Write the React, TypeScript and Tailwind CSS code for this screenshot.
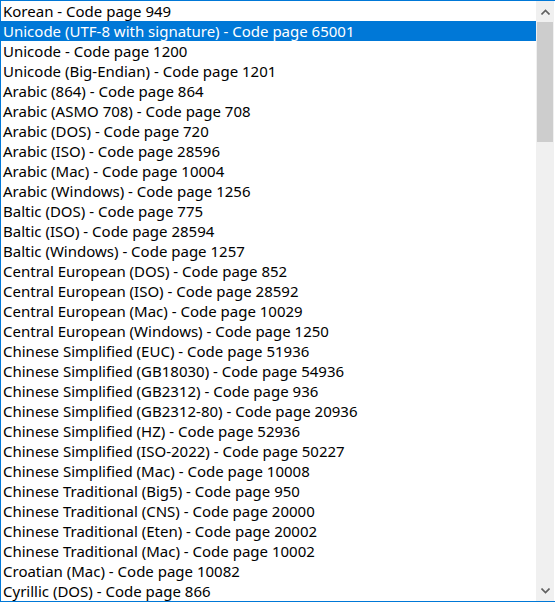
const encodings = [
  'Korean - Code page 949',
  'Unicode (UTF-8 with signature) - Code page 65001',
  'Unicode - Code page 1200',
  'Unicode (Big-Endian) - Code page 1201',
  'Arabic (864) - Code page 864',
  'Arabic (ASMO 708) - Code page 708',
  'Arabic (DOS) - Code page 720',
  'Arabic (ISO) - Code page 28596',
  'Arabic (Mac) - Code page 10004',
  'Arabic (Windows) - Code page 1256',
  'Baltic (DOS) - Code page 775',
  'Baltic (ISO) - Code page 28594',
  'Baltic (Windows) - Code page 1257',
  'Central European (DOS) - Code page 852',
  'Central European (ISO) - Code page 28592',
  'Central European (Mac) - Code page 10029',
  'Central European (Windows) - Code page 1250',
  'Chinese Simplified (EUC) - Code page 51936',
  'Chinese Simplified (GB18030) - Code page 54936',
  'Chinese Simplified (GB2312) - Code page 936',
  'Chinese Simplified (GB2312-80) - Code page 20936',
  'Chinese Simplified (HZ) - Code page 52936',
  'Chinese Simplified (ISO-2022) - Code page 50227',
  'Chinese Simplified (Mac) - Code page 10008',
  'Chinese Traditional (Big5) - Code page 950',
  'Chinese Traditional (CNS) - Code page 20000',
  'Chinese Traditional (Eten) - Code page 20002',
  'Chinese Traditional (Mac) - Code page 10002',
  'Croatian (Mac) - Code page 10082',
  'Cyrillic (DOS) - Code page 866',
];

function Chevron({ up }: { up?: boolean }) {
  return (
    <svg width="9" height="6" viewBox="0 0 9 6" className={up ? '' : 'rotate-180'}>
      <path d="M0.5 5.5 L4.5 1.5 L8.5 5.5" fill="none" stroke="#606060" strokeWidth="1.6" />
    </svg>
  );
}

export default function App() {
  return (
    <div
      className="flex h-[602px] w-[555px] overflow-hidden border-t border-b border-l border-[#0078d7] bg-white text-[15px] text-black"
      style={{ fontFamily: '"Noto Sans", "Open Sans", sans-serif' }}
    >
      <ul className="flex-1">
        {encodings.map((e, i) => (
          <li
            key={e}
            className={`h-[20px] whitespace-nowrap pl-[2px] leading-[20px] ${i === 1 ? 'bg-[#0078d7] text-white' : ''}`}
          >
            {e}
          </li>
        ))}
      </ul>
      {/* scrollbar */}
      <div className="mr-[1px] flex w-[18px] flex-col bg-[#f0f0f0]">
        <div className="flex h-[21px] items-center justify-center">
          <Chevron up />
        </div>
        <div className="mx-[1px] h-[120px] bg-[#cdcdcd]" />
        <div className="flex-1" />
        <div className="flex h-[20px] items-center justify-center">
          <Chevron />
        </div>
      </div>
    </div>
  );
}
